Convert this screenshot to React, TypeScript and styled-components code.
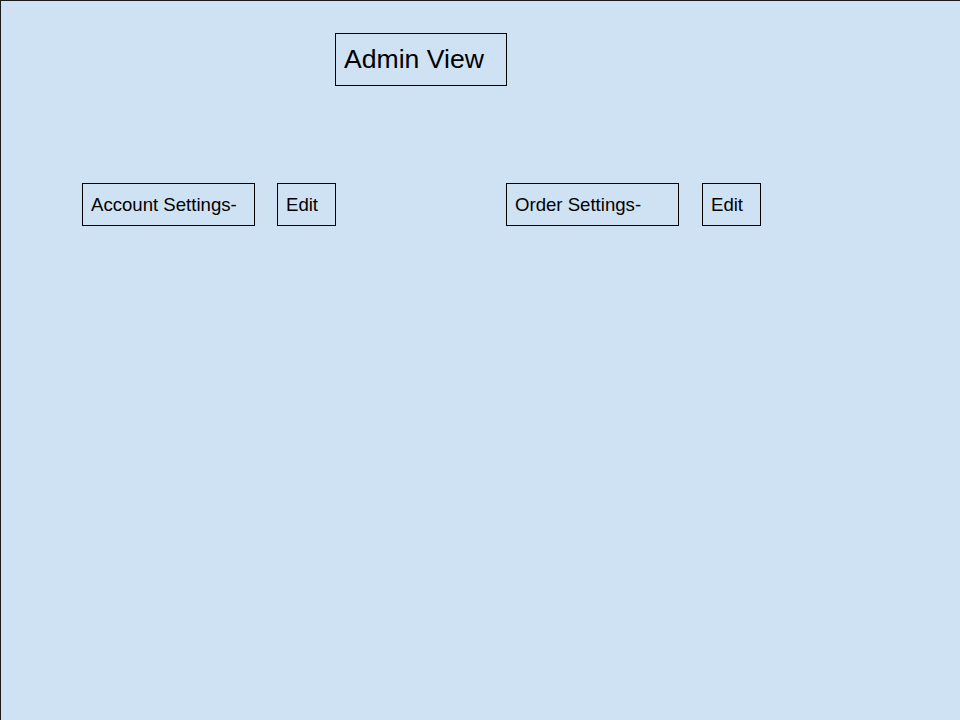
import React from "react";
import styled, { createGlobalStyle } from "styled-components";

const Global = createGlobalStyle`
  html, body { margin: 0; padding: 0; }
  body { font-family: "Liberation Sans", Arial, sans-serif; background: #cfe2f3; }
`;

const Page = styled.div`
  box-sizing: border-box;
  width: 960px;
  height: 720px;
  background: #cfe2f3;
  border-top: 1px solid #1b1b1b;
  border-left: 1px solid #1b1b1b;
  display: flex;
  flex-direction: column;
  overflow: hidden;
`;

const Header = styled.div`
  display: flex;
  padding-top: 32px;
  padding-left: 334px;
`;

const TitleBox = styled.div`
  box-sizing: border-box;
  width: 172px;
  height: 53px;
  border: 1px solid #000;
  display: flex;
  align-items: center;
  padding-left: 8px;
  font-size: 26.6px;
  color: #000;
`;

const Row = styled.div`
  display: flex;
  margin-top: 97px;
  padding-left: 81px;
  gap: 170px;
`;

const Group = styled.div<{ $gap: number }>`
  display: flex;
  gap: ${(p) => p.$gap}px;
`;

const Box = styled.div<{ $w: number }>`
  box-sizing: border-box;
  width: ${(p) => p.$w}px;
  height: 43px;
  border: 1px solid #000;
  display: flex;
  align-items: center;
  padding-left: 8px;
  font-size: 18.6px;
  color: #000;
`;

const items = [
  { label: "Account Settings-", gap: 22 },
  { label: "Order Settings-", gap: 23 },
];

export default function App() {
  return (
    <>
      <Global />
      <Page>
        <Header>
          <TitleBox>Admin View</TitleBox>
        </Header>
        <Row>
          {items.map((it) => (
            <Group key={it.label} $gap={it.gap}>
              <Box $w={173}>{it.label}</Box>
              <Box $w={59}>Edit</Box>
            </Group>
          ))}
        </Row>
      </Page>
    </>
  );
}
